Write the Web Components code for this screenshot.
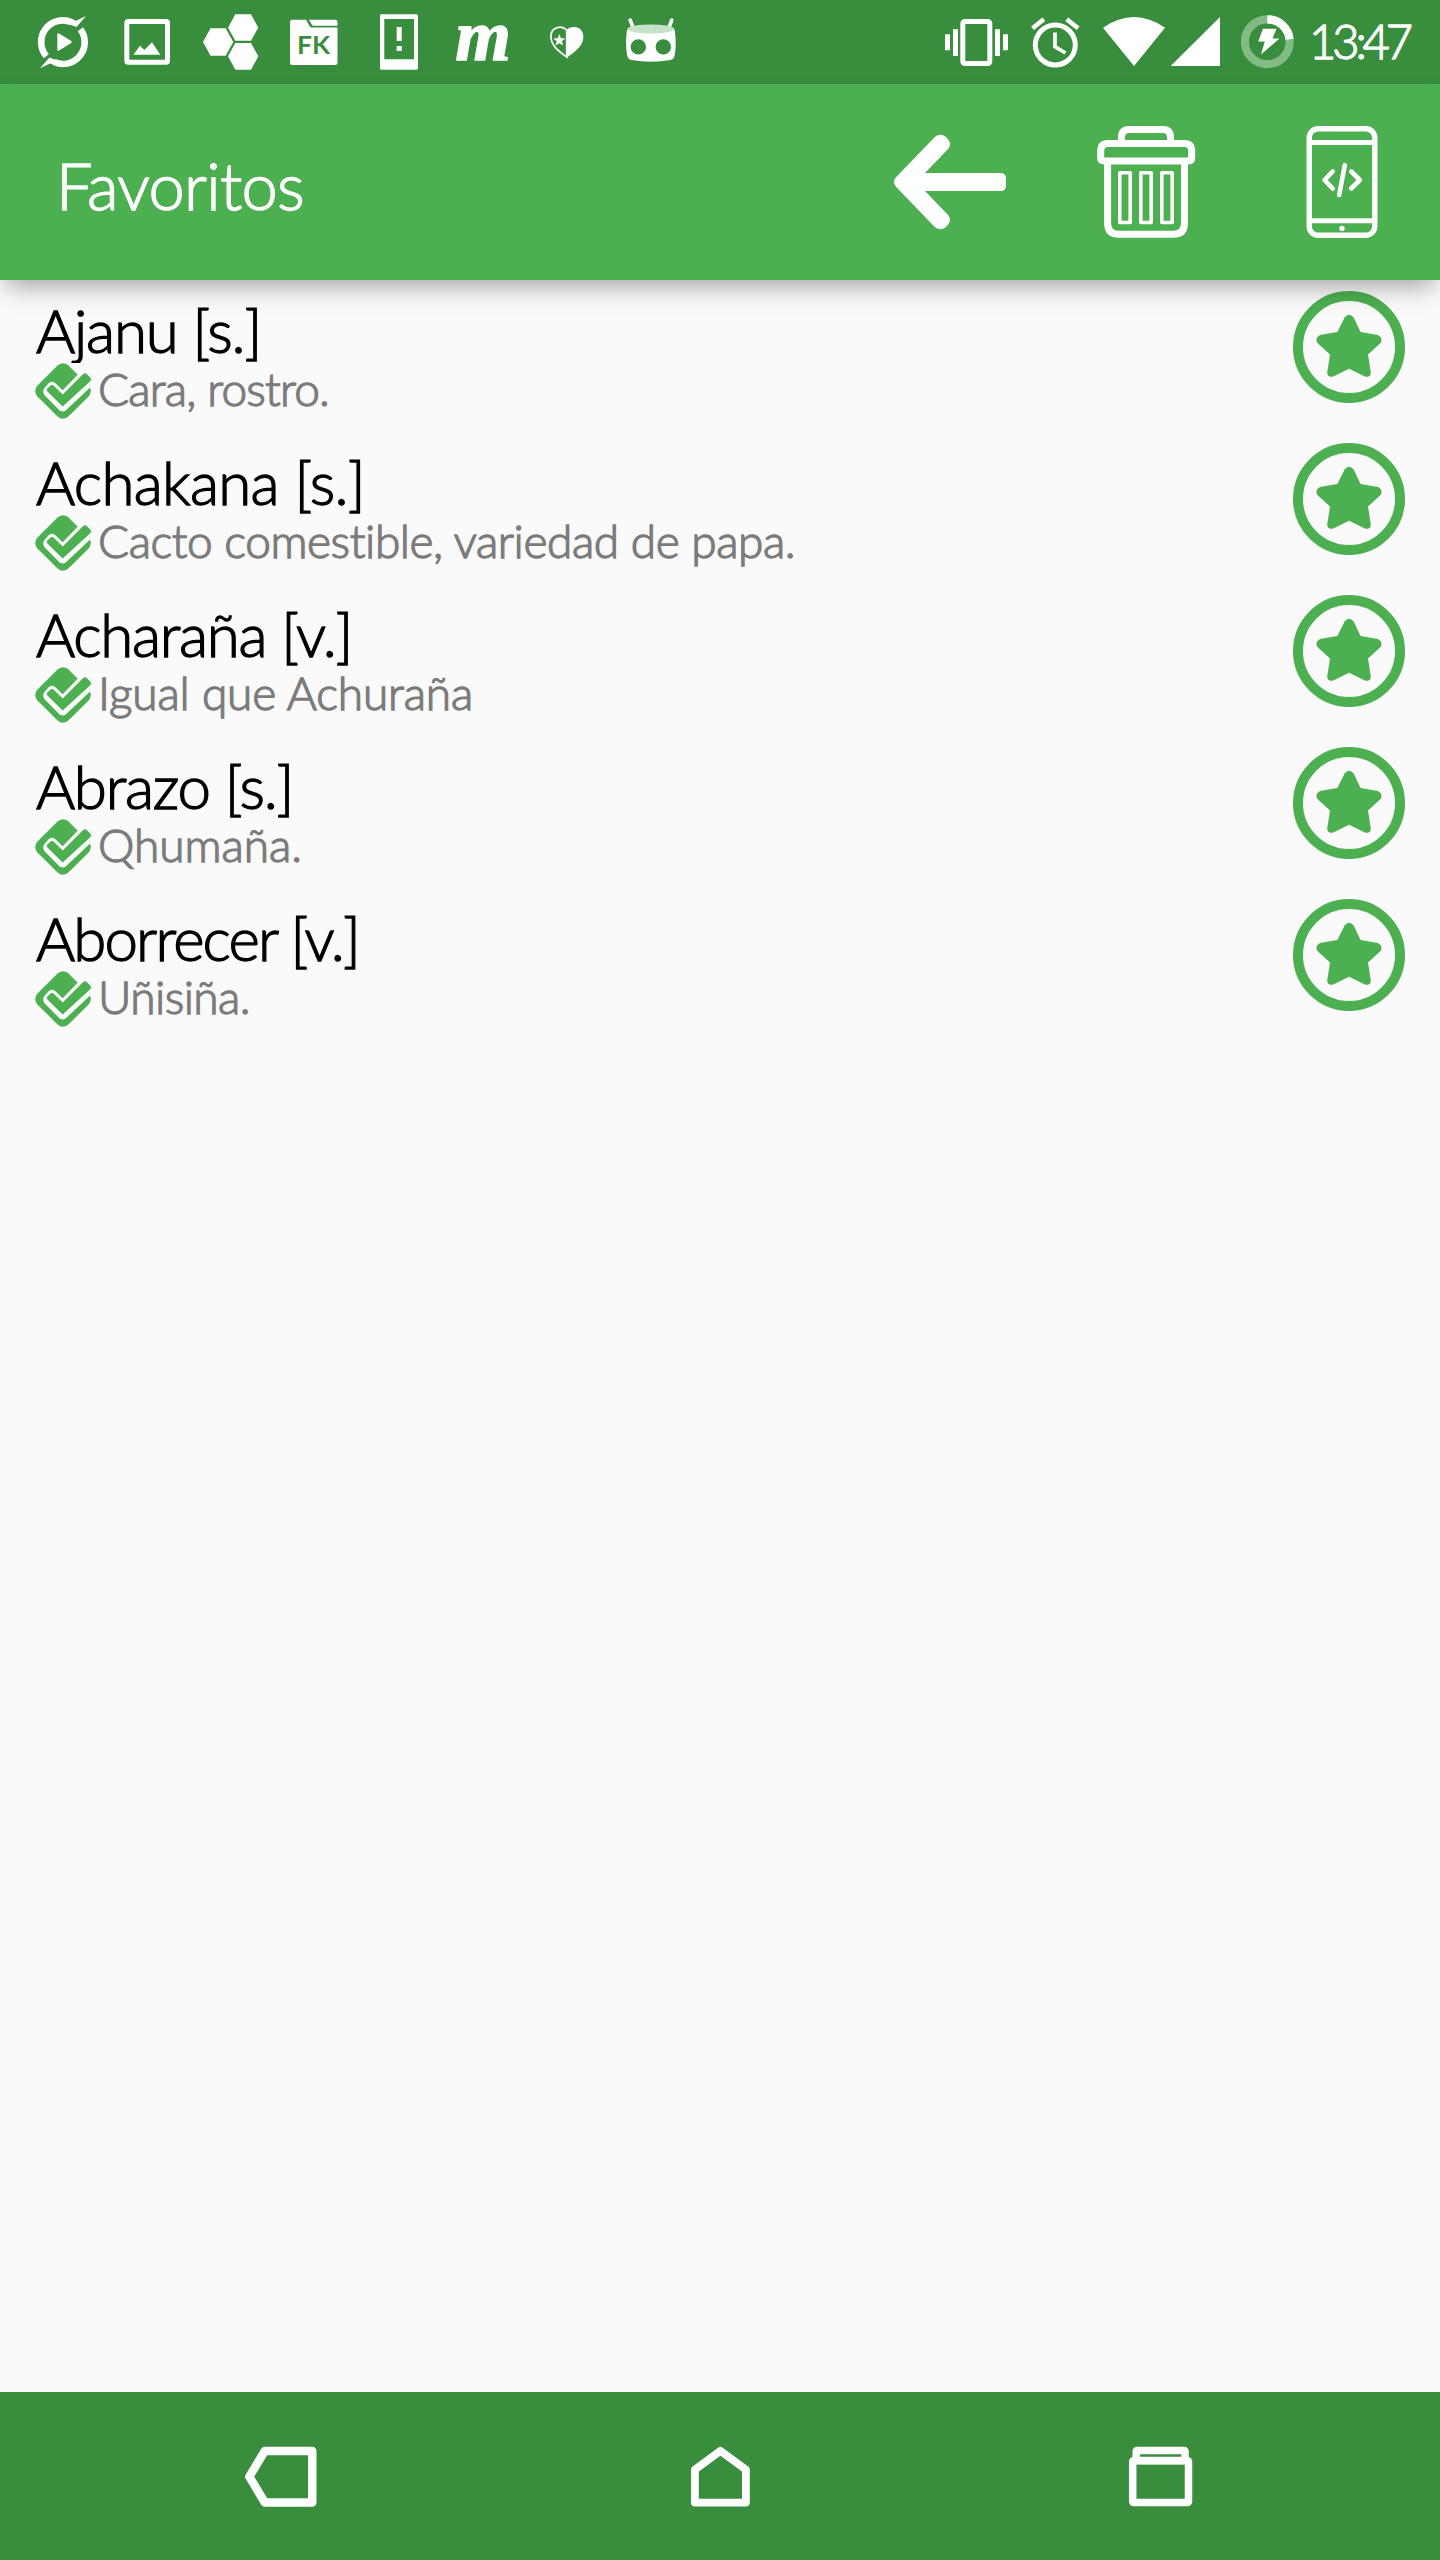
<!DOCTYPE html>
<html lang="es">
<head>
<meta charset="utf-8">
<title>Favoritos</title>
<style>
  html, body {
    margin: 0;
    height: 100%;
    background: #fafafa;
    font-family: Lato, "Open Sans", sans-serif;
    font-weight: 300;
  }
</style>
</head>
<body>
<app-screen>
  <status-bar slot="status" time="13:47"></status-bar>
  <app-toolbar slot="toolbar">
    <fit-text slot="title" width="248">Favoritos</fit-text>
    <ui-icon name="back" size="112"></ui-icon>
    <ui-icon name="trash" size="112"></ui-icon>
    <ui-icon name="phone" size="112"></ui-icon>
  </app-toolbar>
  <word-entry>
    <fit-text slot="word" width="225">Ajanu [s.]</fit-text>
    <fit-text slot="meaning" width="231">Cara, rostro.</fit-text>
  </word-entry>
  <word-entry>
    <fit-text slot="word" width="329">Achakana [s.]</fit-text>
    <fit-text slot="meaning" width="698">Cacto comestible, variedad de papa.</fit-text>
  </word-entry>
  <word-entry>
    <fit-text slot="word" width="316">Acharaña [v.]</fit-text>
    <fit-text slot="meaning" width="375">Igual que Achuraña</fit-text>
  </word-entry>
  <word-entry>
    <fit-text slot="word" width="257">Abrazo [s.]</fit-text>
    <fit-text slot="meaning" width="204">Qhumaña.</fit-text>
  </word-entry>
  <word-entry>
    <fit-text slot="word" width="323">Aborrecer [v.]</fit-text>
    <fit-text slot="meaning" width="152">Uñisiña.</fit-text>
  </word-entry>
  <nav-bar slot="nav"></nav-bar>
</app-screen>

<script>
const icons = {
  // launcher notifications, 84 x 84
  player: `<g fill="none" stroke="#fff" stroke-width="6.6">
      <path d="M25.4 56.2A21.7 21.7 0 0 1 50.8 22.3"/><path d="M59.4 29.3A21.7 21.7 0 0 1 33.2 62.1"/></g>
      <path fill="#fff" d="M49 18.6L55 20.8L65 16L55.5 27L49 24.5ZM35 65.8L29 63.6L19 68.2L28.5 57.4L35 60ZM36.3 34.4Q36.3 32.6 38 33.5L50 40.8Q51.6 42 50 43.2L38 50.5Q36.3 51.4 36.3 49.6Z"/>`,
  image: `<rect x="21.8" y="21.5" width="40.7" height="40.7" rx="1.5" fill="none" stroke="#fff" stroke-width="5"/>
      <path fill="#fff" d="M28.3 54.7L35 45.7L39.3 50L47 42.3L55.3 54.7Z"/>`,
  hexagons: `<path fill="#fff" d="M14 42L21.5 28.3H36.7L44.3 42L36.7 55.8H21.5ZM39 27.7L46.3 14.3H62L69.3 27.7L62 40.7H46.3ZM39 56.3L46.3 43H62L69.3 56.3L62 69.7H46.3Z"/>`,
  folder: `<path fill="#fff" d="M19.5 19.7H33L36.5 26Q37.4 27.5 39 27.5H64.5V62.5Q64.5 65 62 65H19.5Q17 65 17 62.5V22.2Q17 19.7 19.5 19.7ZM36 19.7H62Q64.5 19.7 64.5 22.2V25.7H40.5Q39.4 25.7 38.9 24.8Z"/>
      <text x="24" y="54.2" textLength="33" lengthAdjust="spacingAndGlyphs" fill="#388e3c" font-family="Lato" font-weight="700" font-size="25">FK</text>`,
  alert: `<path fill="#fff" fill-rule="evenodd" d="M24.5 14.3H59.5Q61 14.3 61 15.8V68.2Q61 69.7 59.5 69.7H24.5Q23 69.7 23 68.2V15.8Q23 14.3 24.5 14.3ZM27.3 19V59.3H57V19ZM39.7 27H44.7V41H39.7ZM39.7 46H44.7V51H39.7Z"/>`,
  letter: `<text x="14.5" y="60" fill="#fff" stroke="#fff" stroke-width="1.6" stroke-linejoin="round" font-family="Liberation Serif" font-weight="700" font-style="italic" font-size="71">m</text>`,
  heart: `<path fill="none" stroke="#fff" stroke-width="1.7" d="M41.7 30C37 25.5 26.3 26 25.9 36.2C25.7 46 35 52 41.7 57Z"/>
      <path fill="#fff" d="M41.5 30C46 25 58.2 25.3 58.4 37C58.2 47 48 53 41.5 57.9ZM34.3 34L36 38.2L40.3 38.5L37 41.2L38.1 45.6L34.3 43.2L30.5 45.6L31.6 41.2L28.3 38.5L32.6 38.2Z"/>`,
  robot: `<path stroke="#fff" stroke-width="3.6" stroke-linecap="round" d="M21.2 20L24 27.5M62.8 20L60 27.5"/>
      <path fill="#fff" fill-rule="evenodd" d="M18 29.5Q42 36.5 65.6 29.5Q67.8 44 65.6 55.5Q65 59 61.5 60Q42 63.5 22.3 60Q18.8 59 18.2 55.5Q16 44 18 29.5ZM29.3 39.2A7.7 7.7 0 1 0 29.3 54.6A7.7 7.7 0 1 0 29.3 39.2ZM54.3 39.2A7.7 7.7 0 1 0 54.3 54.6A7.7 7.7 0 1 0 54.3 39.2Z"/>
      <ellipse cx="41.8" cy="29" rx="23.5" ry="4.6" fill="#c8e1c9"/>`,

  // system status
  vibrate: `<rect x="27.8" y="21.5" width="27" height="42" rx="2" fill="none" stroke="#fff" stroke-width="5"/>
      <path fill="#fff" d="M18 29.3H23V56H18ZM10 34.3H15V50.3H10ZM60 29.3H65V56H60ZM68 34.3H73V50.3H68Z"/>`,
  alarm: `<g fill="none" stroke="#fff"><circle cx="40.3" cy="45" r="20" stroke-width="5"/>
      <path stroke-width="3.7" d="M40 32.5V46.7L50.4 53"/><path stroke-width="4.6" d="M17.5 28.3L28.9 19.2M63.1 28.3L51.7 19.2"/></g>`,
  wifi: `<path fill="#fff" d="M39 66L8 27.7Q39 6.5 70 27.7Z"/>`,
  signal: `<path fill="#fff" d="M.7 66H50V17Z"/>`,
  battery: `<circle cx="37.3" cy="41.7" r="22.4" fill="none" stroke="#83bb85" stroke-width="8.2"/>
      <path fill="none" stroke="#fff" stroke-width="8.2" d="M37.3 19.3A22.4 22.4 0 0 1 59.6 39.3"/>
      <path fill="#fff" d="M33 28.7H46.5L42.5 38.5H49.5L31 54.6L34.8 41.5H28.2Z"/>`,

  // toolbar, 112 x 112
  back: `<path fill="#fff" d="M1.8 51.5L41 10.8Q46.5 6.4 52 11L54 13.3Q57.8 18 54.3 22.8L31 47H106.5Q112 47 112 52.5V59.5Q112 65 106.5 65H31L54.3 89.2Q57.8 94 54 98.7L52 101Q46.5 105.6 41 101.2L1.8 60.5Q-1.8 56 1.8 51.5Z"/>`,
  trash: `<g fill="none" stroke="#fff" stroke-width="7">
      <path d="M31.4 16V12Q31.4 3.5 39 3.5H73Q80.6 3.5 80.6 12V16"/>
      <path d="M14 35Q10.7 35 10.7 32V25Q10.7 17.5 18 17.5H94.4Q101.7 17.5 101.7 25V32Q101.7 35 98.4 35Z"/>
      <path d="M17.6 35V97Q17.6 108.3 28.5 108.3H83.5Q94.5 108.3 94.5 97V35"/>
      <path stroke-width="3.6" d="M29.8 46.8H40.2V96.5H29.8ZM50.8 46.8H61.2V96.5H50.8ZM71.8 46.8H82.2V96.5H71.8Z" stroke-linejoin="round"/></g>`,
  phone: `<g fill="none" stroke="#fff"><rect x="23.2" y="2.7" width="65.6" height="106.6" rx="9" stroke-width="5.4"/>
      <path stroke-width="5" d="M23 16.5H89M23 94.8H89"/>
      <path stroke-width="4.6" stroke-linecap="round" stroke-linejoin="round" d="M46.6 45.5L38.6 54L46.6 62.5M65.2 45.5L73.8 54L65.2 62.5M58.8 39.2L53.2 69"/></g>
      <circle cx="56" cy="102.4" r="2.7" fill="#fff"/>`,

  // list
  star: `<circle cx="56" cy="56" r="51" fill="none" stroke="#4caf50" stroke-width="10"/>
      <path fill="#4caf50" d="M51.6 26.5Q56 21 60.6 26.5L67.6 41L85 43.9Q90.4 47 87.6 52L75 63.5L77.8 81.5Q77.3 87.2 71.8 85.4L56 77.7L40.2 85.4Q34.7 87.2 34.2 81.5L37 63.5L24.4 52Q21.6 47 27 43.9L44.4 41Z"/>`,
  check: `<path fill="#4caf50" d="M22.8 2.2Q28 -1.8 33.2 2.2L53.8 22.8Q57.8 28 53.8 33.2L33.2 53.8Q28 57.8 22.8 53.8L2.2 33.2Q-1.8 28 2.2 22.8Z"/>
      <path fill="#fafafa" d="M44.5 9.8L58 0V21.8L31 47.2Q27.7 49.8 24.4 47.2L9.6 32.4Q6.6 28.5 9.8 24.6L13.4 20.4Q17 17 20.8 20.4L27.7 27.2Z"/>
      <path fill="#4caf50" d="M27.7 31.4L48.2 10.9Q50 9.4 51.8 11L55 14.2Q57 16.3 55.2 18.2L27.7 43.6L12.2 28.2Q11.2 26.8 12.4 25.4L15.2 22.8Q17 21.4 18.8 22.8Z"/>`,

  // navigation, 84 x 84
  navBack: `<path fill="none" stroke="#fff" stroke-width="8.4" stroke-linejoin="round" d="M11.3 42.7L26.8 17H74.3V68.5H26.8Z"/>`,
  navHome: `<path fill="none" stroke="#fff" stroke-width="7.8" stroke-linejoin="round" d="M42.4 16.8L16.9 35.6V68.6H67.9V35.6Z"/>`,
  navRecent: `<g fill="none" stroke="#fff" stroke-width="7.5" stroke-linejoin="round">
      <rect x="14.7" y="26.6" width="55.8" height="42" rx="1"/><rect x="18.2" y="16.4" width="48.8" height="10.4" rx="1"/></g>`
};

window.customElements.define(
  "ui-icon",
  class extends HTMLElement {
    constructor() {
      super();
      this.attachShadow({ mode: "open" });
    }

    connectedCallback() {
      const box = Number(this.getAttribute("size") || 84);
      const w = Number(this.getAttribute("w") || box);
      this.shadowRoot.innerHTML = `
    <style>
      :host { display: block; flex: none; }
      svg { display: block; overflow: visible; }
    </style>
    <svg width="${w}" height="${box}" viewBox="0 0 ${w} ${box}">${icons[this.getAttribute("name")]}</svg>
    `;
    }
  }
);

// One line of text, tracked so that it takes the given width
window.customElements.define(
  "fit-text",
  class extends HTMLElement {
    constructor() {
      super();
      this.attachShadow({ mode: "open" }).innerHTML = `
    <style>
      :host { display: flex; white-space: nowrap; }
      span { flex: none; -webkit-text-stroke: 1.3px currentColor; }
    </style>
    <span><slot></slot></span>
    `;
    }

    fit() {
      const span = this.shadowRoot.querySelector("span");
      const extra = this.getAttribute("width") - span.getBoundingClientRect().width;
      span.style.letterSpacing = extra / this.textContent.length + "px";
    }
  }
);

window.customElements.define(
  "status-bar",
  class extends HTMLElement {
    constructor() {
      super();
      this.attachShadow({ mode: "open" }).innerHTML = `
    <style>
      :host {
        display: flex;
        justify-content: space-between;
        height: 84px;
        padding: 0 27px 0 21px;
        background: #388e3c;
        color: #fff;
      }
      div { display: flex; }
      fit-text {
        width: 104px;
        margin-left: 4px;
        font-size: 47px;
        line-height: 83px;
      }
    </style>
    <div>
      <ui-icon name="player"></ui-icon>
      <ui-icon name="image"></ui-icon>
      <ui-icon name="hexagons"></ui-icon>
      <ui-icon name="folder"></ui-icon>
      <ui-icon name="alert"></ui-icon>
      <ui-icon name="letter"></ui-icon>
      <ui-icon name="heart"></ui-icon>
      <ui-icon name="robot"></ui-icon>
    </div>
    <div>
      <ui-icon name="vibrate" w="80"></ui-icon>
      <ui-icon name="alarm" w="80"></ui-icon>
      <ui-icon name="wifi" w="75"></ui-icon>
      <ui-icon name="signal" w="60"></ui-icon>
      <ui-icon name="battery" w="75"></ui-icon>
      <fit-text width="100">${this.getAttribute("time")}</fit-text>
    </div>
    `;
    }
  }
);

window.customElements.define(
  "app-toolbar",
  class extends HTMLElement {
    constructor() {
      super();
      this.attachShadow({ mode: "open" }).innerHTML = `
    <style>
      :host {
        display: flex;
        align-items: center;
        justify-content: space-between;
        box-sizing: border-box;
        height: 196px;
        padding: 0 42px 0 56px;
        background: #4caf50;
        color: #fff;
        box-shadow: 0 12px 24px -6px rgba(0, 0, 0, .36);
      }
      .title { font-size: 65px; padding-top: 6px; }
      .actions { display: flex; gap: 84px; }
    </style>
    <div class="title"><slot name="title"></slot></div>
    <div class="actions"><slot></slot></div>
    `;
    }
  }
);

window.customElements.define(
  "word-entry",
  class extends HTMLElement {
    constructor() {
      super();
      this.attachShadow({ mode: "open" }).innerHTML = `
    <style>
      :host {
        display: flex;
        justify-content: space-between;
        height: 152px;
        padding: 0 35px;
      }
      .word {
        height: 72px;
        overflow: hidden;
        padding-left: 1px;
        font-size: 60px;
        line-height: 79px;
        color: #000;
      }
      .meaning { display: flex; gap: 7px; }
      .text {
        height: 52px;
        overflow: hidden;
        font-size: 46px;
        line-height: 52px;
        color: #7b7b7b;
      }
    </style>
    <div>
      <div class="word"><slot name="word"></slot></div>
      <div class="meaning">
        <ui-icon name="check" size="56"></ui-icon>
        <div class="text"><slot name="meaning"></slot></div>
      </div>
    </div>
    <ui-icon name="star" size="112"></ui-icon>
    `;
    }
  }
);

window.customElements.define(
  "nav-bar",
  class extends HTMLElement {
    constructor() {
      super();
      this.attachShadow({ mode: "open" }).innerHTML = `
    <style>
      :host {
        display: grid;
        grid-template-columns: repeat(3, 440px);
        justify-content: center;
        justify-items: center;
        align-items: center;
        height: 168px;
        background: #388e3c;
      }
    </style>
    <ui-icon name="navBack"></ui-icon>
    <ui-icon name="navHome"></ui-icon>
    <ui-icon name="navRecent"></ui-icon>
    `;
    }
  }
);

window.customElements.define(
  "app-screen",
  class extends HTMLElement {
    constructor() {
      super();
      this.attachShadow({ mode: "open" }).innerHTML = `
    <style>
      :host {
        display: flex;
        flex-direction: column;
        height: 2560px;
        background: #fafafa;
      }
      header { position: relative; z-index: 1; }
      main { flex: 1; padding-top: 11px; }
    </style>
    <header>
      <slot name="status"></slot>
      <slot name="toolbar"></slot>
    </header>
    <main><slot></slot></main>
    <slot name="nav"></slot>
    `;
    }
  }
);

document.querySelectorAll("fit-text").forEach((el) => el.fit());
document.querySelector("status-bar").shadowRoot.querySelector("fit-text").fit();
</script>
</body>
</html>
